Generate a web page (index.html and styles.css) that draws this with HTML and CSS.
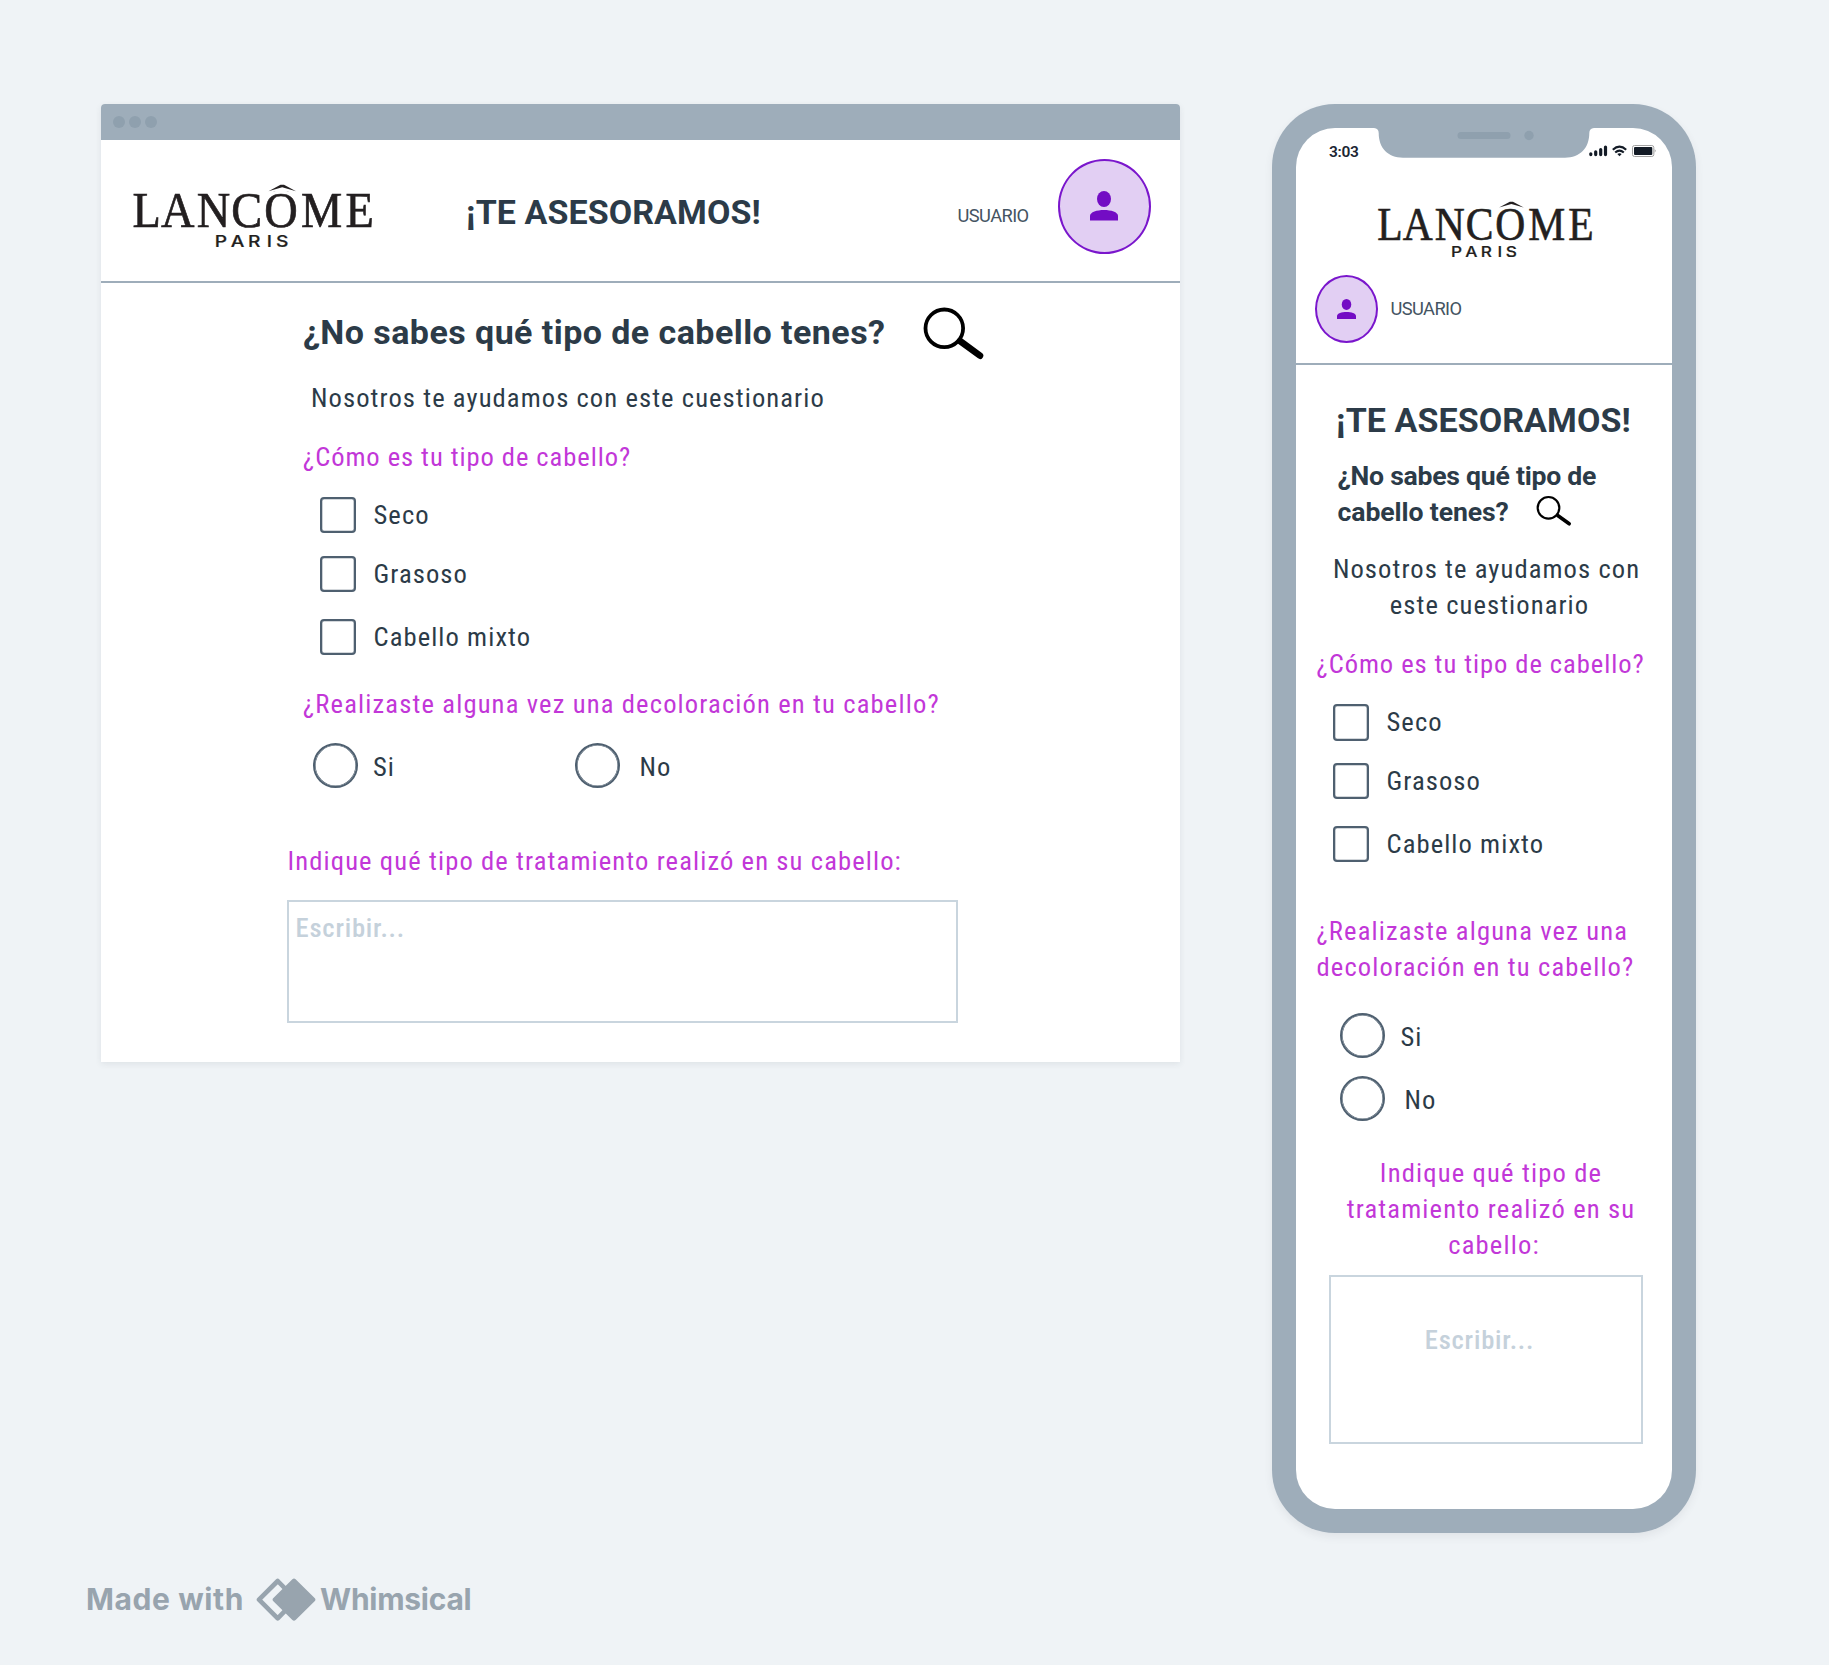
FILE: index.html
```html
<!DOCTYPE html>
<html lang="es">
<head>
<meta charset="utf-8">
<title>Lancôme – ¡Te asesoramos!</title>
<link rel="stylesheet" href="styles.css">
</head>
<body>
<svg class="defs" width="0" height="0" aria-hidden="true">
  <defs>
    <clipPath id="caps"><rect x="120" y="191.4" width="310" height="70"/></clipPath>
    <symbol id="person" viewBox="0 0 28 30" preserveAspectRatio="none">
      <ellipse cx="14" cy="8" rx="7" ry="8"/>
      <path d="M0 29.500V25C0 21 7 19 14 19s14 2 14 6v4.500z"/>
    </symbol>
  </defs>
</svg>

<div class="canvas">
  <section class="window">
    <div class="titlebar"><i></i><i></i><i></i></div>
    <header class="window-header">
      <svg class="logo" viewBox="130 183 246 68">
        <text class="logo-name" transform="scale(.9 1)" clip-path="url(#caps)" y="227.200" x="147.300 179 218.500 257 293.500 334.500 384">LANCÔME</text>
        <path d="M268.500 191.300l12-6.500h3.500l12 6.500-13.800-4z"/>
        <text class="logo-city" transform="scale(1.2 1)" y="246.600" x="179 192.200 206.700 222.300 230">PARIS</text>
      </svg>
      <h1 class="title">¡TE ASESORAMOS!</h1>
      <span class="user-label">USUARIO</span>
      <span class="avatar"><svg><use href="#person"/></svg></span>
    </header>
    <main class="window-body">
      <div class="headline">
        <h2>¿No sabes qué tipo de cabello tenes?</h2>
        <svg class="search" viewBox="922 305 64 56"><circle cx="944.300" cy="328.300" r="18.800" stroke-width="3.800"/><path d="M960 341l20 14.700" stroke-width="6.600"/></svg>
      </div>
      <p class="intro">Nosotros te ayudamos con este cuestionario</p>
      <p class="question hair">¿Cómo es tu tipo de cabello?</p>
      <div class="checks">
        <label><b class="box"></b>Seco</label>
        <label><b class="box"></b>Grasoso</label>
        <label><b class="box"></b>Cabello mixto</label>
      </div>
      <p class="question bleach">¿Realizaste alguna vez una decoloración en tu cabello?</p>
      <div class="radios">
        <label><b class="ring"></b><span>Si</span></label>
        <label><b class="ring"></b><span>No</span></label>
      </div>
      <p class="question treatment">Indique qué tipo de tratamiento realizó en su cabello:</p>
      <div class="field">Escribir...</div>
    </main>
  </section>

  <section class="phone">
    <div class="screen">
      <div class="status">
        <span class="time">3:03</span>
        <svg class="indicators" width="70" height="16" viewBox="1588 143 70 16">
          <g stroke="#131b26" stroke-width="3.200" stroke-linecap="round"><path d="M1590.800 153.800v.8M1595.700 151.800v2.800M1600.700 149.500v5.100M1605.500 147v7.600"/></g>
          <g fill="none" stroke="#131b26" stroke-width="2.100"><path d="M1612.800 149.800q6.700-6.200 13.400 0M1615.200 152.500q4.300-3.800 8.600 0"/></g>
          <path fill="#131b26" d="M1617.300 154q2.200-1.600 4.400 0l-2.200 2.300z"/>
          <rect x="1632.500" y="145.500" width="21.300" height="11" rx="2" fill="#fff" stroke="#a3a3a3"/>
          <rect x="1634" y="147" width="18.300" height="8" rx="1" fill="#131b26"/>
          <path fill="#777" d="M1654.800 149q1.600 1.800 0 3.800z"/>
        </svg>
      </div>
      <svg class="notch" viewBox="0 0 220 30"><path fill="#9eadba" d="M0 0H220Q215.300.5 215.300 5C215.300 20 206 29.700 191 29.700H29C14 29.700 4.700 20 4.700 5Q4.700.5 0 0z"/><rect x="83.500" y="4" width="53" height="7" rx="3.500" fill="#8fa0ae"/><circle cx="155" cy="7.500" r="4.700" fill="#8fa0ae"/></svg>
      <header class="phone-header">
        <svg class="logo" viewBox="130 183 246 68">
          <text class="logo-name" transform="scale(.9 1)" clip-path="url(#caps)" y="227.200" x="147.300 179 218.500 257 293.500 334.500 384">LANCÔME</text>
          <path d="M268.500 191.300l12-6.500h3.500l12 6.500-13.800-4z"/>
          <text class="logo-city" transform="scale(1.2 1)" y="246.600" x="179 192.200 206.700 222.300 230">PARIS</text>
        </svg>
        <div class="user">
          <span class="avatar"><svg><use href="#person"/></svg></span>
          <span class="user-label">USUARIO</span>
        </div>
      </header>
      <main class="phone-body">
        <h1 class="title">¡TE ASESORAMOS!</h1>
        <h2>¿No sabes qué tipo de<span class="with-icon">cabello tenes?<svg class="search" viewBox="1534 493 38 34"><circle cx="1548.500" cy="507.800" r="10.800" stroke-width="2.200"/><path d="M1557.700 515.500l11.500 8.300" stroke-width="3.600"/></svg></span></h2>
        <p class="intro">Nosotros te ayudamos con<span class="last">este cuestionario</span></p>
        <p class="question hair">¿Cómo es tu tipo de cabello?</p>
        <div class="checks">
          <label><b class="box"></b>Seco</label>
          <label><b class="box"></b>Grasoso</label>
          <label><b class="box"></b>Cabello mixto</label>
        </div>
        <p class="question bleach">¿Realizaste alguna vez una<br>decoloración en tu cabello?</p>
        <div class="radios">
          <label><b class="ring"></b><span>Si</span></label>
          <label><b class="ring"></b><span>No</span></label>
        </div>
        <p class="question treatment">Indique qué tipo de<br>tratamiento realizó en su<span class="last">cabello:</span></p>
        <div class="field">Escribir...</div>
      </main>
    </div>
  </section>
</div>

<footer class="credit">
  <span class="made">Made with</span>
  <svg class="mark" width="60" height="44" viewBox="0 0 60 44">
    <path fill="none" d="M3 21.700L21.700 3 40 21.700 21.700 40.400z"/>
    <path d="M19 21.700L38 3l19 18.700-19 18.700z"/>
  </svg>
  <span class="brand">Whimsical</span>
</footer>
</body>
</html>
```
FILE: styles.css
```css
* { box-sizing: border-box; }

body {
  margin: 0;
  background: #eff3f6;
  color: #2c3b48;
  font-family: "Roboto Condensed", Roboto, sans-serif;
  font-size: 26.6px;
  line-height: 36px;
  letter-spacing: 1.07px;
}

h1, h2, p { margin: 0; }

.defs { position: absolute; }

.canvas {
  display: flex;
  align-items: flex-start;
  gap: 92px;
  padding: 104px 0 0 101px;
}

/* shared pieces */
.title, .headline h2 {
  font: 700 34px/40px Roboto, sans-serif;
  white-space: nowrap;
}
.title { letter-spacing: 0.08px; }

.logo { flex: none; display: block; overflow: visible; fill: #231f20; stroke: none; }
.logo-name {
  font: 51.5px "Liberation Serif", serif;
  letter-spacing: 0;
  stroke: #231f20;
  stroke-width: 0.7px;
}
.logo-city {
  font: 500 16px Inter, sans-serif;
  letter-spacing: 0;
  stroke: #231f20;
  stroke-width: 0.2px;
}

.user-label {
  font: 400 18.3px/22px Roboto, sans-serif;
  letter-spacing: -0.6px;
  color: #445462;
}

.avatar {
  flex: none;
  display: flex;
  align-items: center;
  justify-content: center;
  border: 2px solid #7a16cc;
  border-radius: 50%;
  background: #e2cff3;
  fill: #730cc4;
}

.search { fill: none; stroke: #000; stroke-linecap: round; }

.question { color: #c237d8; white-space: nowrap; }
.hair { letter-spacing: 0.92px; }
.bleach { letter-spacing: 1.13px; }

.checks { display: flex; flex-direction: column; gap: 22.700px; }
.checks label, .radios label { display: flex; }
.checks label { gap: 17.500px; height: 36.300px; }
.checks label:last-child { margin-top: 4px; }

.box {
  width: 36.500px;
  height: 36.500px;
  border: 2px solid #4f6070;
  border-radius: 4px;
  box-shadow: inset 0 0 0 0.300px #4f6070;
}
.ring {
  flex: none;
  width: 45px;
  height: 45px;
  border: 2px solid #4f6070;
  border-radius: 50%;
  box-shadow: inset 0 0 0 0.600px #4f6070;
}
.radios span { margin-top: 6px; }

.field {
  border: 2px solid #c9d5de;
  color: #c5d1db;
  font-weight: 500;
  letter-spacing: 0.8px;
}

/* browser window */
.window {
  width: 1079px;
  height: 958px;
  background: #fff;
  border-radius: 4px 4px 0 0;
  box-shadow: 0 2px 6px rgba(60, 70, 80, 0.09);
}
.titlebar {
  display: flex;
  align-items: center;
  gap: 4px;
  height: 36px;
  padding-left: 12px;
  background: #9eadba;
  border-radius: 4px 4px 0 0;
}
.titlebar i {
  width: 12px;
  height: 12px;
  border-radius: 50%;
  background: #8fa0ae;
}
.window-header {
  display: flex;
  align-items: flex-start;
  height: 143px;
  padding: 0 29px;
  border-bottom: 2px solid #9eadba;
}
.window-header .logo { width: 246px; height: 68px; margin-top: 43px; }
.window-header .title { margin: 52px 0 0 90px; }
.window-header .user-label { margin: 65px 29.500px 0 auto; }
.window-header .avatar { width: 93px; height: 95px; margin-top: 19px; }
.window-header .avatar svg { width: 28px; height: 30px; margin: -1px 1px 0 0; }

.window-body { padding: 22px 0 0 202px; }
.headline { display: flex; height: 56px; }
.headline h2 { width: 619px; padding-top: 7px; letter-spacing: 0.44px; }
.headline .search { width: 64px; height: 56px; }
.window-body .intro { margin: 18.500px 0 23px 8px; }
.window-body .checks { margin: 22.300px 0 0 16.500px; }
.window-body .bleach { margin-top: 31px; }
.window-body .radios { display: flex; gap: 178px; margin: 21px 0 0 10px; }
.window-body .radios label { gap: 15px; width: 84px; }
.window-body .radios label + label { gap: 19.500px; }
.window-body .treatment { margin: 55px 0 21px -15.500px; letter-spacing: 1.1px; }
.window-body .field { width: 671px; height: 123px; margin-left: -16.500px; padding: 8px 0 0 7px; }

/* phone */
.phone {
  width: 424px;
  height: 1429px;
  padding: 24px;
  border-radius: 63px;
  background: #9eadba;
  box-shadow: 0 4px 8px rgba(60, 70, 80, 0.08);
}
.screen {
  position: relative;
  height: 1381px;
  border-radius: 39px;
  background: #fff;
}
.status {
  display: flex;
  justify-content: space-between;
  height: 40px;
  padding: 15px 14px 0 33px;
}
.time {
  margin-top: -1px;
  font: 600 15.500px/20px Roboto, sans-serif;
  letter-spacing: -0.3px;
  color: #1b2633;
}
.notch { position: absolute; top: 0; left: 77.500px; width: 220px; height: 30px; margin-top: -0.300px; }

.phone-header { height: 197px; padding-top: 32px; border-bottom: 2px solid #9eadba; }
.phone-header .logo { width: 220.400px; height: 61px; margin-left: 79px; }
.user { display: flex; align-items: center; gap: 13px; margin: 14px 0 0 18.500px; }
.user .avatar { width: 63px; height: 68px; }
.user .avatar svg { width: 19px; height: 20.500px; }

.phone-body { padding: 35px 0 0 20.500px; }
.phone-body .title { margin-left: 19.500px; }
.phone-body h2 {
  margin: 18px 0 0 21px;
  font: 700 26.6px/36px Roboto, sans-serif;
  letter-spacing: -0.25px;
}
.with-icon { display: flex; height: 36px; letter-spacing: -0.1px; }
.phone-body .search { width: 38px; height: 34px; margin: -1px 0 0 25px; }
.phone-body .intro { width: 320px; margin: 21px 0 23px 10px; text-align: center; }
.last { display: block; padding-left: 6px; }
.phone-body .checks { margin: 22px 0 0 16px; }
.phone-body .bleach { margin-top: 51px; }
.phone-body .radios { display: flex; flex-direction: column; gap: 18px; margin: 28px 0 0 23px; }
.phone-body .radios label { gap: 16px; }
.phone-body .radios label + label { gap: 20px; }
.phone-body .treatment { width: 320px; margin: 33.500px 0 12px 14.500px; text-align: center; letter-spacing: 1.15px; }
.phone-body .field {
  width: 314px;
  height: 169px;
  margin-left: 12px;
  padding: 45px 12px 0 0;
  text-align: center;
}

/* footer */
.credit {
  display: flex;
  height: 44px;
  margin: 45px 0 0 86px;
  color: #98a4ae;
  font: 700 30px/43px Inter, sans-serif;
}
.mark { fill: #98a4ae; stroke: #98a4ae; stroke-width: 4.600px; stroke-linejoin: round; }
.made { width: 170px; letter-spacing: 0.6px; }
.brand { margin-left: 4px; letter-spacing: -0.25px; }
```
